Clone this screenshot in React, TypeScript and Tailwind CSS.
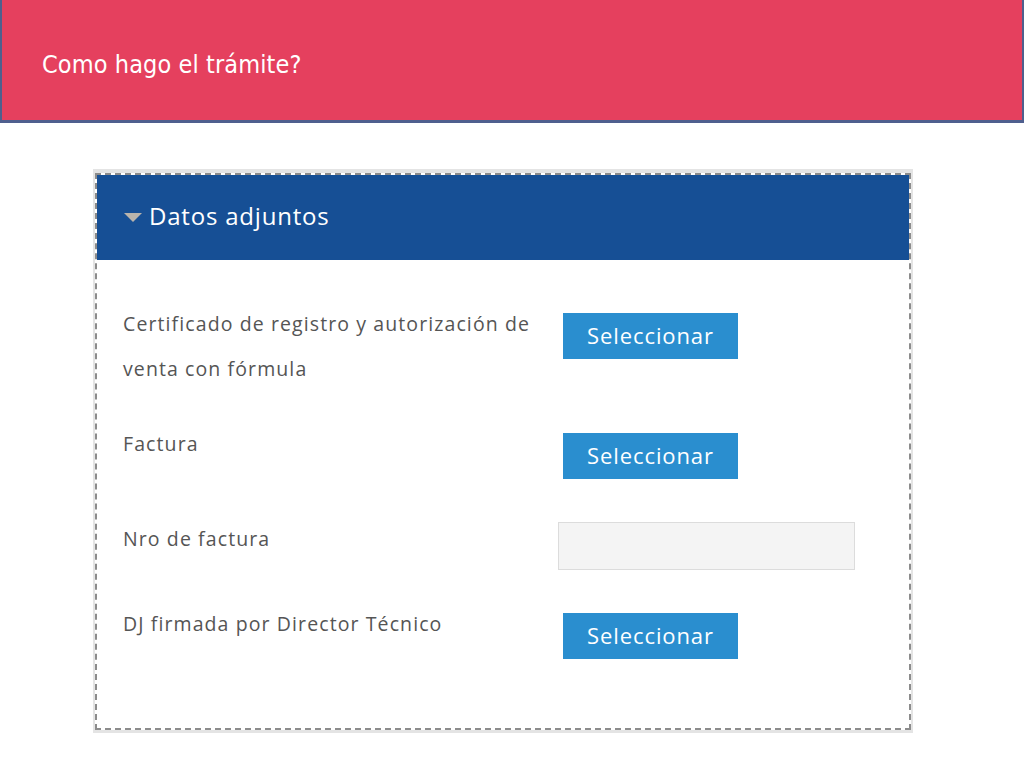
import React from "react";

const bodyFont = { fontFamily: "'Open Sans', Lato, sans-serif" };

function SelectButton() {
  return (
    <button
      type="button"
      className="w-[175px] h-[46px] bg-[#2a8ecf] text-white text-[22px] tracking-[0.9px] leading-none flex items-center justify-center pb-[2px]"
      style={bodyFont}
    >
      Seleccionar
    </button>
  );
}

function Label({ children }: { children: React.ReactNode }) {
  return (
    <div className="w-[435px] text-[19.5px] tracking-[1.1px] leading-[45px] text-[#555555]" style={bodyFont}>
      {children}
    </div>
  );
}

export default function App() {
  return (
    <div className="w-[1024px] h-[768px] bg-white relative overflow-hidden">
      {/* Title bar */}
      <div className="h-[123px] bg-[#e5405e] border-l-2 border-r-2 border-b-[3px] border-[#4f5f8e] flex items-center">
        <h1
          className="pl-[40px] text-white text-[25px] tracking-[0.1px] leading-none mt-[8px]"
          style={{ fontFamily: "'DejaVu Sans Condensed', 'DejaVu Sans', Verdana, sans-serif", fontStretch: "condensed" }}
        >
          Como hago el trámite?
        </h1>
      </div>

      {/* Panel */}
      <div className="mt-[46px] ml-[93px] w-[820px] border-t-[4px] border-x-[2px] border-b-[3px] border-[#e4e4e4]">
        <div className="border-2 border-dashed border-[#8c8c8c] bg-white">
          <div className="h-[85px] bg-[#164f95] flex items-center pl-[27px]" style={bodyFont}>
            <svg width="18" height="10" viewBox="0 0 18 10" className="mr-[7px] mt-[1px]">
              <path d="M0 0 H18 L9 9 Z" fill="#b9b4ac" />
            </svg>
            <span className="text-white text-[24px] tracking-[0.8px] leading-none pb-[3px]">Datos adjuntos</span>
          </div>

          <div className="pt-[41px] pb-[69px] pl-[26px]">
            <div className="flex">
              <Label>
                Certificado de registro y autorización de
                <br />
                venta con fórmula
              </Label>
              <div className="pt-[12px] pl-[5px]">
                <SelectButton />
              </div>
            </div>

            <div className="flex mt-[30px]">
              <Label>Factura</Label>
              <div className="pt-[12px] pl-[5px]">
                <SelectButton />
              </div>
            </div>

            <div className="flex mt-[37px]">
              <Label>Nro de factura</Label>
              <div className="pt-[6px]">
                <input
                  type="text"
                  className="w-[297px] h-[48px] bg-[#f4f4f4] border border-[#dcdcdc] outline-none block"
                />
              </div>
            </div>

            <div className="flex mt-[31px]">
              <Label>DJ firmada por Director Técnico</Label>
              <div className="pt-[12px] pl-[5px]">
                <SelectButton />
              </div>
            </div>
          </div>
        </div>
      </div>
    </div>
  );
}
